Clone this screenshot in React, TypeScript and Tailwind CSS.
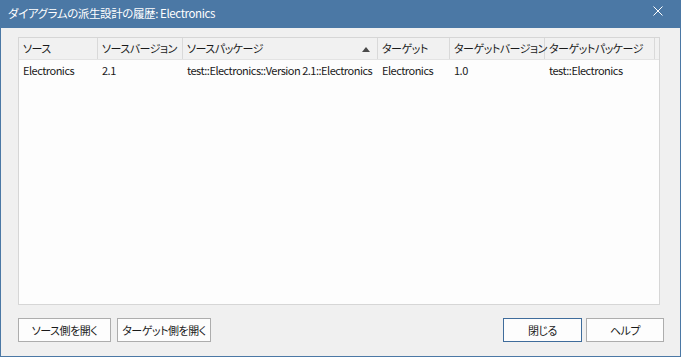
import React from "react";

const cols = [
  { label: "ソース", w: 79 },
  { label: "ソースバージョン", w: 85 },
  { label: "ソースパッケージ", w: 195, sort: true },
  { label: "ターゲット", w: 72 },
  { label: "ターゲットバージョン", w: 95 },
  { label: "ターゲットパッケージ", w: 110 },
];

const row = [
  "Electronics",
  "2.1",
  "test::Electronics::Version 2.1::Electronics",
  "Electronics",
  "1.0",
  "test::Electronics",
];

export default function App() {
  return (
    <div
      className="w-[681px] h-[357px] flex flex-col text-[11px] tracking-[-0.5px] text-[#1a1a1a] [font-feature-settings:'palt']"
      style={{ fontFamily: '"Noto Sans CJK JP", "Noto Sans", sans-serif' }}
    >
      <div className="h-[28px] bg-[#4b78a5] flex items-center justify-between pl-[8px] pr-[18px] text-white text-[11.5px] tracking-[-0.4px]">
        <span className="leading-none">ダイアグラムの派生設計の履歴: Electronics</span>
        <svg width="10" height="10" viewBox="0 0 10 10" className="mt-[-6px]">
          <path d="M0.5 0.5 L9.5 9.5 M9.5 0.5 L0.5 9.5" stroke="white" strokeWidth="1" />
        </svg>
      </div>
      <div className="flex-1 bg-[#f0f0f0] border-x border-b border-[#4b78a5] flex flex-col pt-[9px] pl-[17px] pr-[16px] pb-[13px]">
        <div className="h-[268px] mr-[4px] border border-[#d6d6d6] bg-[#fdfdfd] flex flex-col">
          <div className="h-[22px] flex bg-[#f1f1f1] border-b border-[#e3e3e3]">
            {cols.map((c, i) => (
              <div
                key={i}
                className="relative shrink-0 flex items-center pl-[4px] border-r border-[#d9d9d9] whitespace-nowrap leading-none"
                style={{ width: c.w }}
              >
                {c.label}
                {c.sort && (
                  <svg width="8" height="5" viewBox="0 0 8 5" className="absolute right-[7px] top-[9px]">
                    <path d="M0 5 L4 0 L8 5 Z" fill="#4a4a4a" />
                  </svg>
                )}
              </div>
            ))}
            <div className="flex-1" />
          </div>
          <div className="h-[21px] flex items-center">
            {row.map((t, i) => (
              <div
                key={i}
                className="shrink-0 pl-[4px] whitespace-nowrap leading-none"
                style={{ width: cols[i].w }}
              >
                {t}
              </div>
            ))}
          </div>
        </div>
        <div className="mt-[13px] h-[24px] flex justify-between">
          <div className="flex gap-[6px]">
            <button className="w-[93px] h-[24px] border border-[#adadad] bg-[#fdfdfd] leading-none whitespace-nowrap">ソース側を開く</button>
            <button className="w-[94px] h-[24px] border border-[#adadad] bg-[#fdfdfd] leading-none whitespace-nowrap">ターゲット側を開く</button>
          </div>
          <div className="flex gap-[4px]">
            <button className="w-[79px] h-[24px] border border-[#3f6c9b] bg-[#fdfdfd] leading-none whitespace-nowrap">閉じる</button>
            <button className="w-[78px] h-[24px] border border-[#adadad] bg-[#fdfdfd] leading-none whitespace-nowrap">ヘルプ</button>
          </div>
        </div>
      </div>
    </div>
  );
}
